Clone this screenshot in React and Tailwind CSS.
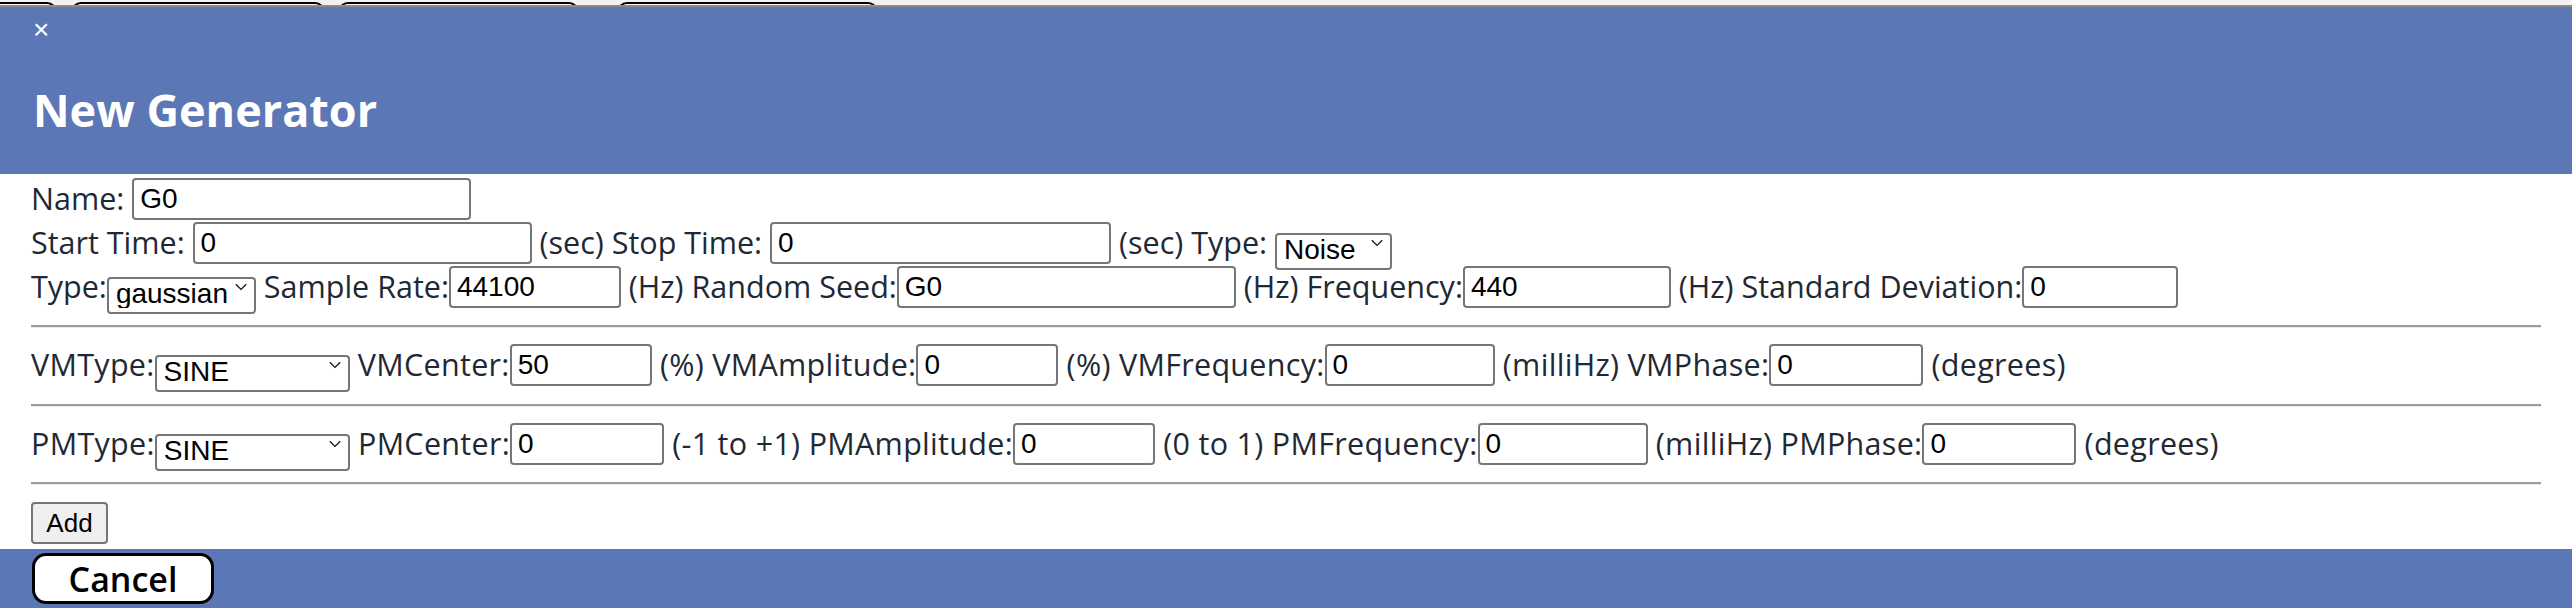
import clsx from "clsx";

const ctl = "font-['Liberation_Sans',Arial,sans-serif] text-[28px] text-black tracking-normal";

function Field({ value, className }) {
  return (
    <input
      defaultValue={value}
      className={clsx(
        "h-[42px] shrink-0 rounded-[4px] border-2 border-[#767676] bg-white px-[6px] outline-none",
        ctl,
        className
      )}
    />
  );
}

function Choice({ value, className }) {
  return (
    <div className={clsx("relative h-[37px] shrink-0", className)}>
      <select
        defaultValue={value}
        className={clsx(
          "h-full w-full appearance-none rounded-[4px] border-2 border-[#767676] bg-white pb-[4px] pt-0 pl-[7px] pr-[22px] leading-[29px] outline-none",
          ctl
        )}
      >
        <option>{value}</option>
      </select>
      <svg
        viewBox="0 0 16 10"
        className="pointer-events-none absolute right-[8px] top-[14px] h-[8px] w-[14px]"
      >
        <path d="M1.5 1.5 8 8l6.5-6.5" fill="none" stroke="#111" strokeWidth="1.6" />
      </svg>
    </div>
  );
}

function Row({ children, className }) {
  return <div className={clsx("flex h-[44px] items-center whitespace-pre", className)}>{children}</div>;
}

function Rule({ className }) {
  return <div className={clsx("border-t-2 border-b border-t-[#9b9b9b] border-b-[#ececec]", className)} />;
}

export default function App() {
  return (
    <div className="h-[608px] w-[2572px] overflow-hidden bg-white font-['Open_Sans',sans-serif] text-[30.5px] text-[#1f2935]">
      <div className="flex h-[5px] items-start overflow-hidden bg-[#f2f2f2]">
        <div className="-ml-[13px] mt-[2px] h-[30px] w-[70px] shrink-0 rounded-[10px] border-2 border-black bg-[#fafafa]" />
        <div className="ml-[14px] mt-[2px] h-[30px] w-[254px] shrink-0 rounded-[10px] border-2 border-black bg-[#fafafa]" />
        <div className="ml-[13px] mt-[2px] h-[30px] w-[241px] shrink-0 rounded-[10px] border-2 border-black bg-[#fafafa]" />
        <div className="ml-[38px] mt-[2px] h-[30px] w-[261px] shrink-0 rounded-[10px] border-2 border-black bg-[#fafafa]" />
      </div>
      <div className="h-[2px] bg-[#8a8a8a]" />

      <header className="h-[167px] bg-[#5b77b5] pl-[33px] text-white">
        <div className="pt-[6px] font-['Liberation_Sans',Arial,sans-serif] text-[28px] leading-[34px]">×</div>
        <h2 className="mt-[40px] text-[45px] font-bold leading-none">New Generator</h2>
      </header>

      <div className="px-[31px] pt-[3px]">
        <Row>
          <span>Name: </span>
          <Field value="G0" className="w-[339px]" />
        </Row>
        <Row>
          <span>Start Time: </span>
          <Field value="0" className="w-[339px]" />
          <span> (sec) Stop Time: </span>
          <Field value="0" className="w-[341px]" />
          <span> (sec) Type: </span>
          <Choice value="Noise" className="w-[117px]" />
        </Row>
        <Row>
          <span>Type:</span>
          <Choice value="gaussian" className="w-[149px]" />
          <span> Sample Rate:</span>
          <Field value="44100" className="w-[172px]" />
          <span> (Hz) Random Seed:</span>
          <Field value="G0" className="w-[339px]" />
          <span> (Hz) Frequency:</span>
          <Field value="440" className="w-[208px]" />
          <span> (Hz) Standard Deviation:</span>
          <Field value="0" className="w-[156px]" />
        </Row>

        <Rule className="mb-[15px] mt-[16px]" />
        <Row className="tracking-[0.3px]">
          <span>VMType:</span>
          <Choice value="SINE" className="w-[195px]" />
          <span> VMCenter:</span>
          <Field value="50" className="w-[142px]" />
          <span> (%) VMAmplitude:</span>
          <Field value="0" className="w-[142px]" />
          <span> (%) VMFrequency:</span>
          <Field value="0" className="w-[170px]" />
          <span> (milliHz) VMPhase:</span>
          <Field value="0" className="w-[154px]" />
          <span> (degrees)</span>
        </Row>

        <Rule className="mb-[15px] mt-[17px]" />
        <Row className="tracking-[0.3px]">
          <span>PMType:</span>
          <Choice value="SINE" className="w-[195px]" />
          <span> PMCenter:</span>
          <Field value="0" className="w-[154px]" />
          <span> (-1 to +1) PMAmplitude:</span>
          <Field value="0" className="w-[142px]" />
          <span> (0 to 1) PMFrequency:</span>
          <Field value="0" className="w-[170px]" />
          <span> (milliHz) PMPhase:</span>
          <Field value="0" className="w-[154px]" />
          <span> (degrees)</span>
        </Row>

        <Rule className="mt-[16px]" />
        <div className="mb-[5px] mt-[17px] flex">
          <button
            type="button"
            className={clsx(
              "h-[42px] w-[77px] rounded-[4px] border-2 border-[#767676] bg-[#efefef] text-[26px]",
              "font-['Liberation_Sans',Arial,sans-serif] text-black"
            )}
          >
            Add
          </button>
        </div>
      </div>

      <footer className="h-[59px] bg-[#5b77b5] pl-[32px] pt-[4px]">
        <button
          type="button"
          className="h-[51px] w-[182px] rounded-[14px] border-[3px] border-black bg-white text-[34px] font-semibold leading-none text-black"
        >
          Cancel
        </button>
      </footer>
    </div>
  );
}
